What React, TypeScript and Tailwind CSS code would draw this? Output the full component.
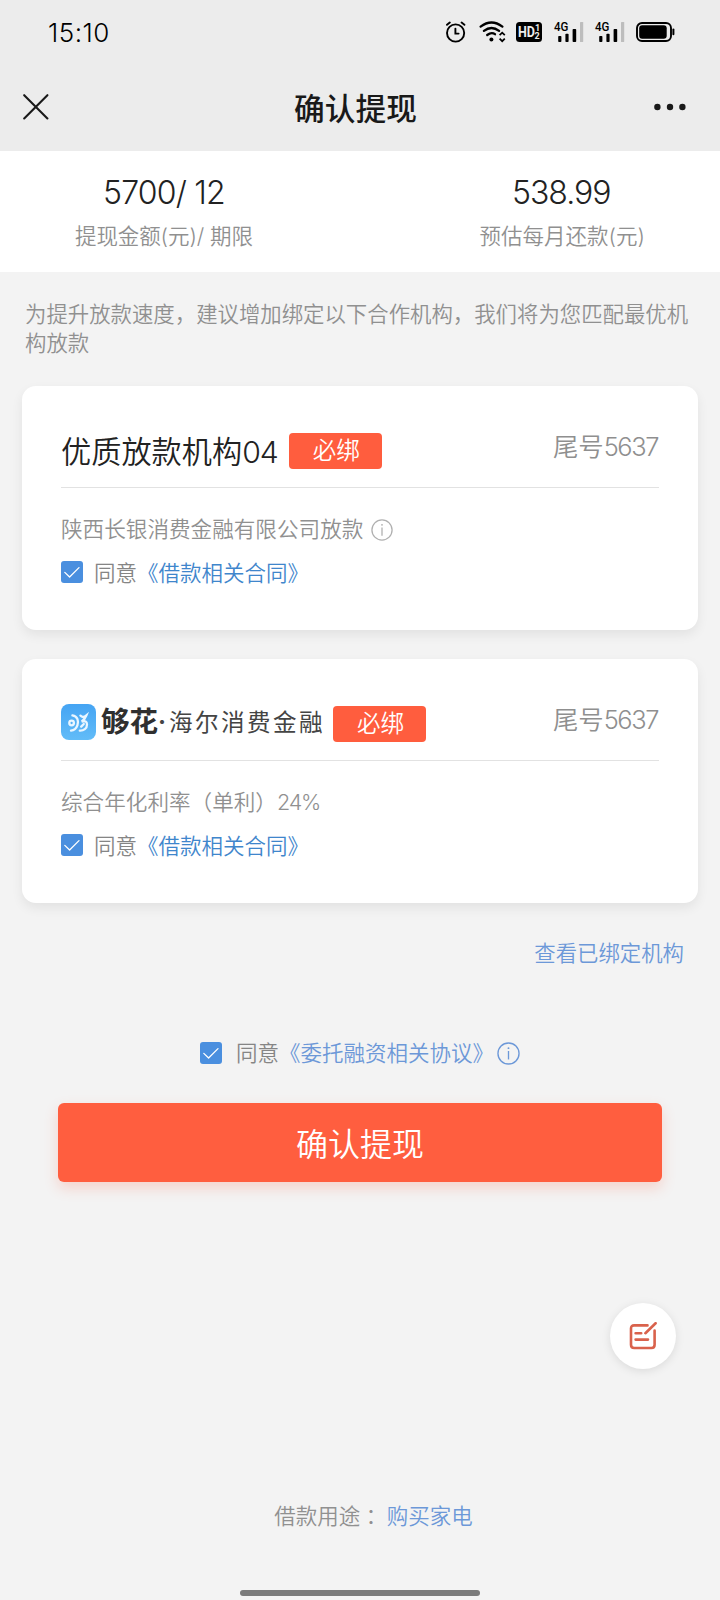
import React from 'react';

const SignalIcon: React.FC = () => (
  <svg width="30" height="24" viewBox="0 -2 30 24" className="mb-[2px] shrink-0 overflow-visible">
    <text x="0" y="10.4" fontSize="13" fontWeight="500" fontFamily="Roboto, sans-serif" textLength="14.4" lengthAdjust="spacingAndGlyphs">4G</text>
    <rect x="4.2" y="15" width="3.2" height="6" rx="0.8" />
    <rect x="11.4" y="12.8" width="3.2" height="8.2" rx="0.8" />
    <rect x="18.6" y="8" width="3.6" height="13" rx="0.8" />
    <rect x="26" y="1" width="3.2" height="20" rx="0.6" fill="#bdbdbd" />
  </svg>
);

const StatusBar: React.FC = () => (
  <div className="flex h-16 items-center pl-12">
    <span className="w-[398px] text-[26px] font-[350] tracking-[0.5px] text-black">15:10</span>
    <div className="flex items-center text-black">
      {/* Alarm */}
      <svg width="20" height="22" viewBox="0 0 20 22" fill="none" stroke="currentColor" strokeWidth="1.9" strokeLinecap="round">
        <circle cx="9.6" cy="12" r="8.6" />
        <path d="M9.4 7.6v5h3.2" />
        <path d="M1 3.8 3.8 1.6M18.4 3.8 15.6 1.6" />
      </svg>
      {/* Wifi */}
      <svg width="27" height="22" viewBox="0 0 27 22" fill="none" stroke="currentColor" strokeWidth="2.3" strokeLinecap="round" className="ml-[13px]">
        <path d="M1.6 5.6Q12.5 -2.6 23.4 5.6" />
        <path d="M4.9 9.9Q12.5 4 20.1 9.9" />
        <path d="M8.2 14Q12.5 10.6 16 13.2" />
        <circle cx="12.4" cy="18.4" r="2" fill="currentColor" stroke="none" />
        <path d="M20.6 14.2 23.2 11.6 25.8 14.2M20.6 17.6 23.2 20.2 25.8 17.6" strokeWidth="1.7" strokeLinecap="butt" />
      </svg>
      {/* HD */}
      <svg width="26" height="22" viewBox="0 0 26 22" className="ml-[10px]">
        <rect x="0" y="1" width="26" height="20" rx="3.5" />
        <g fill="#ececec" fontFamily="Roboto, sans-serif" fontWeight="700">
          <text x="2" y="16" fontSize="14.5" textLength="17" lengthAdjust="spacingAndGlyphs">HD</text>
          <text x="19" y="10.4" fontSize="9">1</text>
          <text x="18.6" y="18.4" fontSize="9">2</text>
        </g>
      </svg>
      <div className="ml-3 flex gap-[11px]">
        <SignalIcon />
        <SignalIcon />
      </div>
      {/* Battery */}
      <svg width="39" height="22" viewBox="0 0 39 22" className="ml-[11px]">
        <rect x="1" y="2" width="34" height="18" rx="5" fill="none" stroke="currentColor" strokeWidth="1.9" />
        <rect x="3.2" y="4.2" width="27.5" height="13.6" rx="3" />
        <rect x="36.4" y="7.6" width="2" height="6.6" rx="1" />
      </svg>
    </div>
  </div>
);

const NavBar: React.FC = () => (
  <div className="flex h-[87px] items-center justify-between pr-[34px] pb-px pl-[23px] text-[#191919]">
    <svg width="26" height="26" viewBox="0 0 26 26" fill="none" stroke="currentColor" strokeWidth="2.1" strokeLinecap="round">
      <path d="M1.2 1.2 24.4 24.4M24.4 1.2 1.2 24.4" />
    </svg>
    <h1 className="pt-[3px] pl-[8px] text-[30.7px] leading-10 font-medium">确认提现</h1>
    <svg width="32" height="8" viewBox="0 0 32 8" fill="currentColor">
      <circle cx="3.4" cy="4" r="3.2" />
      <circle cx="16" cy="4" r="3.2" />
      <circle cx="28.4" cy="4" r="3.2" />
    </svg>
  </div>
);

const InfoIcon: React.FC<{ size: number }> = ({ size }) => (
  <svg width={size} height={size} viewBox="0 0 24 24" fill="none" stroke="currentColor" strokeWidth="1.4" className="shrink-0">
    <circle cx="12" cy="12" r="11" />
    <path d="M12 9.4v8.8" />
    <circle cx="12" cy="6.4" r="1" fill="currentColor" stroke="none" />
  </svg>
);

const Checkbox: React.FC = () => (
  <svg width="22" height="22" viewBox="0 0 22 22" fill="none" className="shrink-0">
    <rect width="22" height="22" rx="3" fill="#4a8fdf" />
    <path d="M3.8 11.4 8.6 16 18 6.6" stroke="#fff" strokeWidth="1.3" strokeLinecap="round" strokeLinejoin="round" />
  </svg>
);

const GouHuaLogo: React.FC = () => (
  <div className="mb-[4px] flex items-center text-[#444]">
    <svg width="35" height="36" viewBox="0 0 35 36" fill="none" strokeLinecap="round">
      <defs>
        <linearGradient id="gouhua" x1="0" y1="0" x2="0" y2="1">
          <stop offset="0" stopColor="#45a4f3" />
          <stop offset="1" stopColor="#62bcf8" />
        </linearGradient>
      </defs>
      <rect width="35" height="36" rx="8" fill="url(#gouhua)" />
      <g stroke="#eaf6ff" strokeWidth="2.3">
        <path d="M11.4 11.4C16.8 12.2 17.8 17.4 16.4 21.4C15.3 24.4 12.8 26.4 10 26.6" />
        <circle cx="10.6" cy="19" r="2.3" />
        <path d="M19.4 11.6Q21.8 14.4 25.4 11.4Q23.8 15.6 20.6 17.6Q26 16.2 26 20.4C26 24.6 22.6 26.8 18.8 26.6" />
        <path d="M20.2 22.6 22.8 20" />
      </g>
    </svg>
    <span className="ml-[5px] text-[28.5px] leading-9 font-bold text-[#2f2f2f]">够花</span>
    <span className="w-[9px] text-[24px] leading-9 font-bold">·</span>
    <span className="ml-[2px] pt-px text-[23.6px] leading-9 tracking-[2.4px]">海尔消费金融</span>
  </div>
);

interface LenderCardProps {
  title: React.ReactNode;
  badgeGap: string;
  children: React.ReactNode;
}

const LenderCard: React.FC<LenderCardProps> = ({ title, badgeGap, children }) => (
  <section className="mx-[22px] h-[244px] rounded-[14px] bg-white px-[39px] shadow-[0_5px_12px_rgba(0,0,0,0.07)]">
    <div className="flex h-[102px] items-start justify-between border-b border-[#e2e2e2] pt-[45px]">
      <div className="flex h-10 items-center">
        {title}
        <span className={`${badgeGap} flex h-9 w-[93px] items-center justify-center rounded-[4px] bg-[#ff5d3e] pl-[2px] text-[23.5px] leading-9 font-[350] text-white`}>
          必绑
        </span>
      </div>
      <span className="flex items-center pr-px text-[25.4px] leading-8 font-[350] text-[#8f8f8f]">
        尾号<span className="tracking-[-1.4px]">5637</span>
      </span>
    </div>
    <div className="mt-[27px] flex h-7 items-center pt-px text-[21.6px] font-[350] whitespace-nowrap text-[#909090]">{children}</div>
    <div className="mt-[15px] flex h-7 items-center text-[21.5px] font-[350] whitespace-nowrap text-[#858585]">
      <Checkbox />
      <span className="ml-[11px] pt-[2px]">同意</span>
      <span className="pt-[2px] text-[#3f86cc]">《借款相关合同》</span>
    </div>
  </section>
);

const App: React.FC = () => {
  return (
    <div
      lang="zh-CN"
      className="relative h-[1600px] w-[720px] overflow-hidden bg-[#f3f3f3] font-['Inter','Noto_Sans_CJK_SC',sans-serif]"
    >
      <header className="h-[151px] bg-[#ececec]">
        <StatusBar />
        <NavBar />
      </header>

      {/* Summary */}
      <div className="flex h-[121px] justify-between bg-white pt-[22px] pr-[75px] pl-[75px] text-center">
        <div>
          <div className="text-[32px] leading-10 font-[350] tracking-[-0.8px] text-[#222]">5700/ 12</div>
          <div className="mt-[9px] text-[21.5px] leading-7 font-[350] tracking-[-0.1px] text-[#909090]">提现金额(元)/ 期限</div>
        </div>
        <div>
          <div className="pr-[2px] text-[32px] leading-10 font-[350] tracking-[-1px] text-[#222]">538.99</div>
          <div className="mt-[9px] text-[21.5px] leading-7 font-[350] text-[#909090]">预估每月还款(元)</div>
        </div>
      </div>

      <p className="mt-[28px] mb-[28px] pl-[25px] text-[21.4px] leading-[29px] font-[350] whitespace-nowrap text-[#909090]">
        为提升放款速度，建议增加绑定以下合作机构，我们将为您匹配最优机
        <br />
        构放款
      </p>

      {/* Lenders */}
      <div className="flex flex-col gap-[29px]">
        <LenderCard
          badgeGap="ml-[11px]"
          title={
            <span className="pt-px text-[30.2px] leading-10 font-[350] text-[#222]">
              优质放款机构<span className="tracking-[-1px]">04</span>
            </span>
          }
        >
          陕西长银消费金融有限公司放款
          <span className="ml-[8px] text-[#b0b0b0]">
            <InfoIcon size={22} />
          </span>
        </LenderCard>
        <LenderCard badgeGap="ml-[8px] mb-px" title={<GouHuaLogo />}>
          综合年化利率（单利）<span className="tracking-[-1.2px]">24%</span>
        </LenderCard>
      </div>

      <a className="mt-[34px] mr-9 block text-right text-[21.4px] leading-8 font-[350] text-[#6c98d8]">查看已绑定机构</a>

      <div className="mt-[68px] flex h-8 items-center pl-[200px] text-[21.5px] font-[350] whitespace-nowrap text-[#858585]">
        <Checkbox />
        <span className="ml-[14px]">同意</span>
        <span className="text-[#6c98d8]">《委托融资相关协议》</span>
        <span className="ml-[3px] text-[#6c98d8]">
          <InfoIcon size={23} />
        </span>
      </div>

      <button className="mx-[58px] mt-[34px] block h-[79px] w-[604px] rounded-[6px] bg-[#ff5e3f] pt-[5px] text-[32px] leading-10 font-[350] text-white shadow-[0_6px_14px_rgba(255,94,63,0.22)]">
        确认提现
      </button>

      {/* Feedback */}
      <button className="absolute top-[1303px] left-[610px] flex size-[66px] items-center justify-center rounded-full bg-white shadow-[0_2px_10px_rgba(0,0,0,0.1)]">
        <svg width="28" height="29" viewBox="0 0 28 29" fill="none" stroke="#d9624c" strokeWidth="2.6" strokeLinecap="round">
          <path d="M18.5 3.4H5.2Q2 3.4 2 6.6V22.8Q2 26 5.2 26H22.4Q25.6 26 25.6 22.8V8.6" />
          <path d="M16.4 11.2 26.6 1.2" />
          <path d="M6.6 11.2H12.2M6.6 17.6H19" />
        </svg>
      </button>

      <div className="mt-[318px] flex justify-center pl-[27px] text-[21.5px] leading-8 font-[350] whitespace-nowrap text-[#909090]">
        <span>借款用途</span>
        <span lang="zh-TW" className="mr-[5px] font-['Noto_Sans_CJK_TC',sans-serif]">：</span>
        <span className="text-[#6c98d8]">购买家电</span>
      </div>

      <div className="mx-auto mt-[58px] h-[6px] w-[240px] rounded-full bg-[#7b7b7b]" />
    </div>
  );
};

export default App;
